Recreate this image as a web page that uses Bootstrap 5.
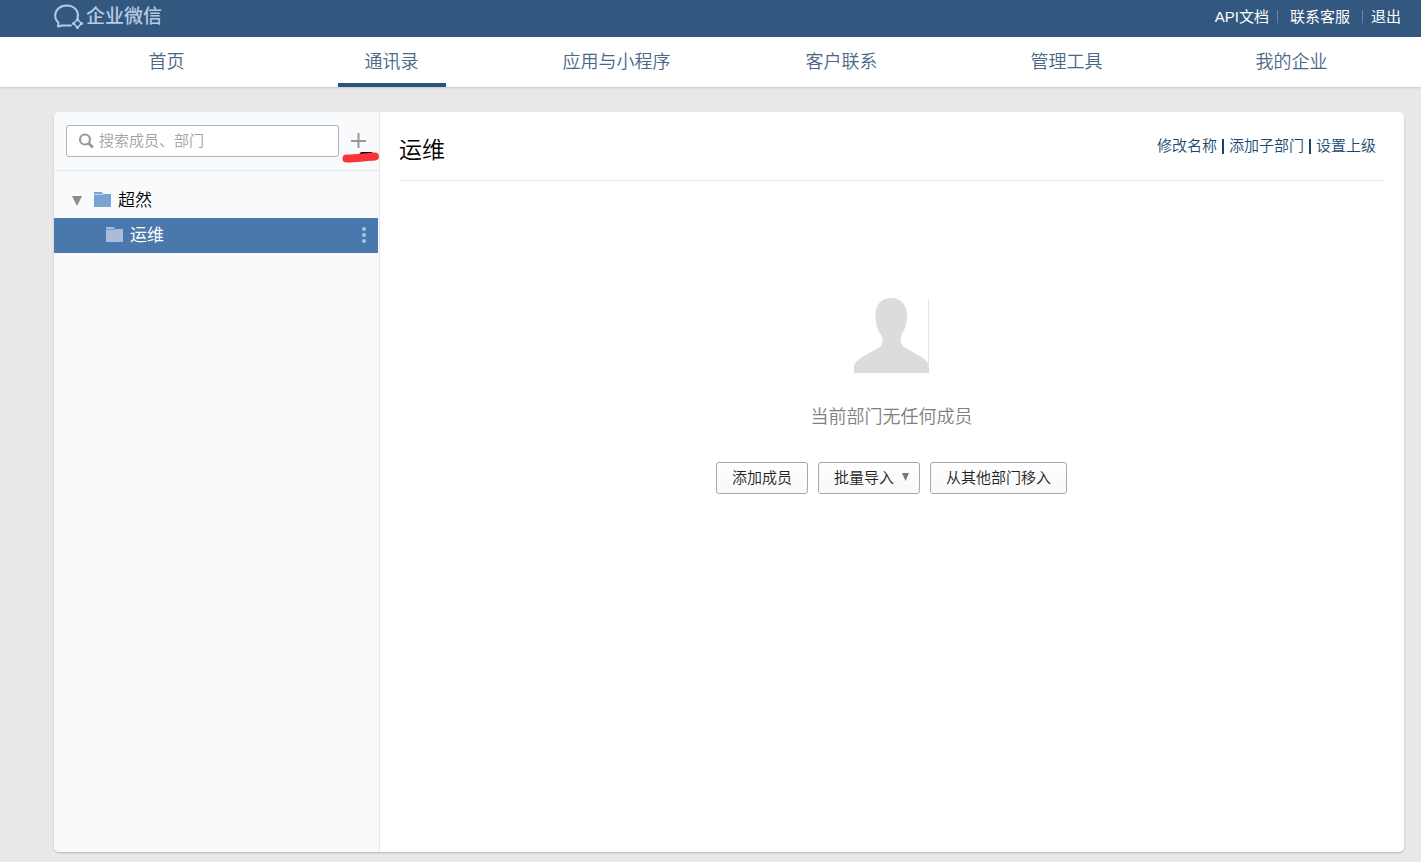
<!DOCTYPE html>
<html lang="zh-CN">
<head>
<meta charset="utf-8">
<meta name="viewport" content="width=device-width, initial-scale=1">
<title>企业微信</title>
<link href="https://cdn.jsdelivr.net/npm/bootstrap@5.3.0/dist/css/bootstrap.min.css" rel="stylesheet">
<style>
body{background:#e8e8e8;color:#000;font-family:"Liberation Sans","Noto Sans CJK SC",sans-serif;font-size:15px;font-weight:350;line-height:20px}
a{text-decoration:none}
.edge{padding-left:54px;padding-right:17px}
.topbar{background:#33587f;height:37px;padding-bottom:4px}
.brand-link{color:#b5cbe3;font-size:19px;font-weight:500;gap:2px}
.toplinks{gap:8px;padding-right:3px}
.toplinks a{color:#fff;font-weight:400}
.toplinks .sep{width:1px;height:13px;background:#6583a8}
.mainnav{background:#fff;height:50px;box-shadow:0 1px 2px rgba(0,0,0,.14)}
.mainnav a{color:#4a6785;font-size:18px;height:50px;padding:0 27px}
.mainnav a.active{box-shadow:inset 0 -4px #2b5278}
.stage{padding-top:25px;padding-bottom:10px}
.panel{background:#fff;border-radius:5px;box-shadow:0 1px 2px rgba(0,0,0,.22)}
.side{width:326px;background:#f9fafc;border-right:1px solid #e4e8ec}
.side-head{height:59px;padding:0 12px;border-bottom:1px solid #e1e7ed}
.search{width:273px;height:32px;border:1px solid #a9b3bc;border-radius:3px;background:#fff;padding:0 11px;gap:4px}
.search input{border:0;outline:0;background:none;min-width:0;font-weight:350}
.search input::placeholder{color:#a3a3a3;opacity:1}
.plus{padding:0;border:0;background:none;margin-left:11px;line-height:0}
.scribble{position:absolute;left:-8px;top:18px}
.tree{padding-top:12px}
.tree a{height:35px;font-size:17px;color:#000;padding-left:17px}
.tree .caret{margin-right:11px}
.tree a.sub{background:#4a78ad;color:#fff;padding-left:52px;padding-right:12px;margin-right:1px;font-weight:400}
.tree span{padding-left:7px}
.main-pane{padding:0 20px 0 19px}
.main-head{height:69px;border-bottom:1px solid #e8e8e8;padding-right:8px}
.main-head h1{font-size:23px;line-height:32px;font-weight:350;padding-top:22px}
.ops{padding-top:24px;gap:5px}
.ops a{color:#194a72}
.ops .bar{width:2px;height:15px;background:#174468}
.empty{padding-top:116px}
.empty p{font-size:18px;line-height:24px;color:#808080;margin:31px 0 33px}
.actions{gap:10px}
.btn-plain{--bs-btn-font-size:15px;--bs-btn-line-height:20px;--bs-btn-padding-y:5px;--bs-btn-padding-x:15px;--bs-btn-border-radius:3px;--bs-btn-color:#222;--bs-btn-border-color:#a9a9a9;--bs-btn-font-weight:350;background:linear-gradient(#fff,#f8f8f8)}
.btn-plain.more{padding-right:9px;gap:7px}
</style>
</head>
<body>
<div class="d-flex flex-column min-vh-100">
<header class="topbar edge d-flex align-items-center justify-content-between">
  <a href="#" class="brand-link d-flex align-items-center">
    <svg width="30" height="28" viewBox="0 0 30 28" fill="none" stroke="#b5cbe3" stroke-width="2" stroke-linecap="round" stroke-linejoin="round"><path d="M23.500 15C25.500 8 20 2.500 12.500 2.500C6 2.500 1.200 7 1.200 12.500C1.200 15.500 2.500 18 4.500 19.500L4 23.500L8 22.500H17"/><path d="M23.500 16.500L27.500 20.500L23.500 24.500L19.500 20.500Z" stroke-width="1.600"/><path d="M23.500 16.500h.1M27.500 20.500h.1M23.500 24.500h.1M19.500 20.500h.1" stroke-width="3"/></svg>
    <span>企业微信</span>
  </a>
  <nav class="toplinks d-flex align-items-center">
    <a href="#">API文档</a><span class="sep"></span>
    <a href="#" class="ms-1">联系客服</a><span class="sep ms-1"></span>
    <a href="#">退出</a>
  </nav>
</header>
<nav class="mainnav edge">
  <div class="row g-0 row-cols-6 text-center">
    <div class="col"><a href="#" class="d-inline-flex align-items-center">首页</a></div>
    <div class="col"><a href="#" class="d-inline-flex align-items-center active" aria-current="page">通讯录</a></div>
    <div class="col"><a href="#" class="d-inline-flex align-items-center">应用与小程序</a></div>
    <div class="col"><a href="#" class="d-inline-flex align-items-center">客户联系</a></div>
    <div class="col"><a href="#" class="d-inline-flex align-items-center">管理工具</a></div>
    <div class="col"><a href="#" class="d-inline-flex align-items-center">我的企业</a></div>
  </div>
</nav>
<div class="stage edge flex-grow-1 d-flex">
  <div class="panel flex-grow-1 d-flex overflow-hidden">
    <aside class="side flex-shrink-0">
      <div class="side-head d-flex align-items-center">
        <label class="search d-flex align-items-center">
          <svg class="flex-shrink-0" width="17" height="17" viewBox="0 0 17 17" fill="none" stroke="#999"><circle cx="7" cy="6.500" r="5" stroke-width="2.200"/><path d="M10.700 10.300L14.800 14.500" stroke-width="2.800"/></svg>
          <input type="text" class="flex-grow-1 p-0" placeholder="搜索成员、部门" aria-label="搜索成员、部门">
        </label>
        <button type="button" class="plus position-relative" aria-label="添加">
          <svg width="17" height="17" viewBox="0 0 17 17"><path d="M8.500 0v15M1 8h15" stroke="#999" stroke-width="2"/></svg>
          <svg class="scribble" width="40" height="13" viewBox="0 0 40 13" fill="none" stroke-linecap="round"><path d="M5 8.500H14M20 3.500H29" stroke="#200" stroke-width="5"/><path d="M4.500 7.500C14 7.500 23 6 33 5.500" stroke="#fb3337" stroke-width="8"/></svg>
        </button>
      </div>
      <nav class="tree">
        <a href="#" class="d-flex align-items-center">
          <svg class="caret" width="12" height="12" viewBox="0 0 12 12"><path d="M1 1h10L6 11z" fill="#8c8c8c"/></svg>
          <svg width="17" height="17" viewBox="0 0 17 17"><path d="M0 0h8l1 2h8v13H0z" fill="#7aa3d4"/><path d="M0 2.500h9" stroke="#c6d8ee"/></svg>
          <span class="flex-grow-1">超然</span>
        </a>
        <a href="#" class="sub d-flex align-items-center">
          <svg width="17" height="17" viewBox="0 0 17 17"><path d="M0 0h8l1 2h8v13H0z" fill="#a9bddb"/><path d="M0 2.500h9" stroke="#7698c4"/></svg>
          <span class="flex-grow-1">运维</span>
          <svg width="4" height="17" viewBox="0 0 4 17" fill="#a5c4e6"><circle cx="2" cy="2" r="2"/><circle cx="2" cy="8" r="2"/><circle cx="2" cy="14" r="2"/></svg>
        </a>
      </nav>
    </aside>
    <main class="main-pane flex-grow-1">
      <div class="main-head d-flex justify-content-between align-items-start">
        <h1 class="m-0">运维</h1>
        <div class="ops d-flex align-items-center">
          <a href="#">修改名称</a><span class="bar"></span><a href="#">添加子部门</a><span class="bar"></span><a href="#">设置上级</a>
        </div>
      </div>
      <div class="empty d-flex flex-column align-items-center">
        <svg width="76" height="77" viewBox="0 0 76 77"><path d="M37 1C47 1 53 8 53 18C53 27 51 32 48 37C46 41 46 45 49 49C55 54 72 60 75 68V76H0V68C4 60 21 54 27 49C29.500 45 29 42 27 38C23.500 33 21.500 27 21.500 18C21.500 8 27 1 37 1Z" fill="#dcdcdc"/><path d="M74.500 3V70" stroke="#e4e4e4"/></svg>
        <p>当前部门无任何成员</p>
        <div class="actions d-flex justify-content-center">
          <button type="button" class="btn btn-plain">添加成员</button>
          <button type="button" class="btn btn-plain more d-flex align-items-center">批量导入<svg width="9" height="10" viewBox="0 0 9 10"><path d="M1 0h7L4.500 8z" fill="#777"/></svg></button>
          <button type="button" class="btn btn-plain">从其他部门移入</button>
        </div>
      </div>
    </main>
  </div>
</div>
</div>
<script src="https://cdn.jsdelivr.net/npm/bootstrap@5.3.0/dist/js/bootstrap.bundle.min.js"></script>
</body>
</html>
